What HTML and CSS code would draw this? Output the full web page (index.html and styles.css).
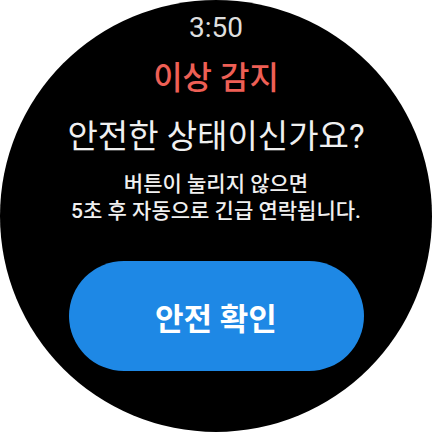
FILE: index.html
```html
<!DOCTYPE html>
<html lang="ko">
<head>
<meta charset="utf-8">
<link rel="stylesheet" href="styles.css">
</head>
<body>
<div class="watch">
  <div class="time">3:50</div>
  <div class="alert">이상 감지</div>
  <div class="question">안전한 상태이신가요?</div>
  <div class="desc">버튼이 눌리지 않으면<br>5초 후 자동으로 긴급 연락됩니다.</div>
  <button class="confirm">안전 확인</button>
</div>
</body>
</html>
```
FILE: styles.css
```css
html, body {
  margin: 0;
  padding: 0;
  background: #fff;
}
.watch {
  width: 432px;
  height: 432px;
  border-radius: 50%;
  background: #000;
  display: flex;
  flex-direction: column;
  align-items: center;
  font-family: Roboto, "Noto Sans CJK KR", sans-serif;
  box-sizing: border-box;
  padding-top: 12px;
}
.time {
  color: #dedede;
  font-size: 28px;
  line-height: 32px;
  font-weight: 400;
}
.alert {
  color: #ee5f55;
  font-size: 32px;
  line-height: 40px;
  font-weight: 500;
  margin-top: 14px;
}
.question {
  color: #f0f0f0;
  font-size: 33px;
  line-height: 42px;
  font-weight: 400;
  margin-top: 18px;
}
.desc {
  color: #f0f0f0;
  font-size: 21px;
  line-height: 27px;
  font-weight: 500;
  text-align: center;
  margin-top: 13px;
}
.confirm {
  margin-top: 36px;
  width: 295px;
  height: 110px;
  border: none;
  border-radius: 55px;
  background: #1e88e5;
  color: #fff;
  font-family: Roboto, "Noto Sans CJK KR", sans-serif;
  font-size: 31px;
  font-weight: 700;
  padding: 0;
}
```
